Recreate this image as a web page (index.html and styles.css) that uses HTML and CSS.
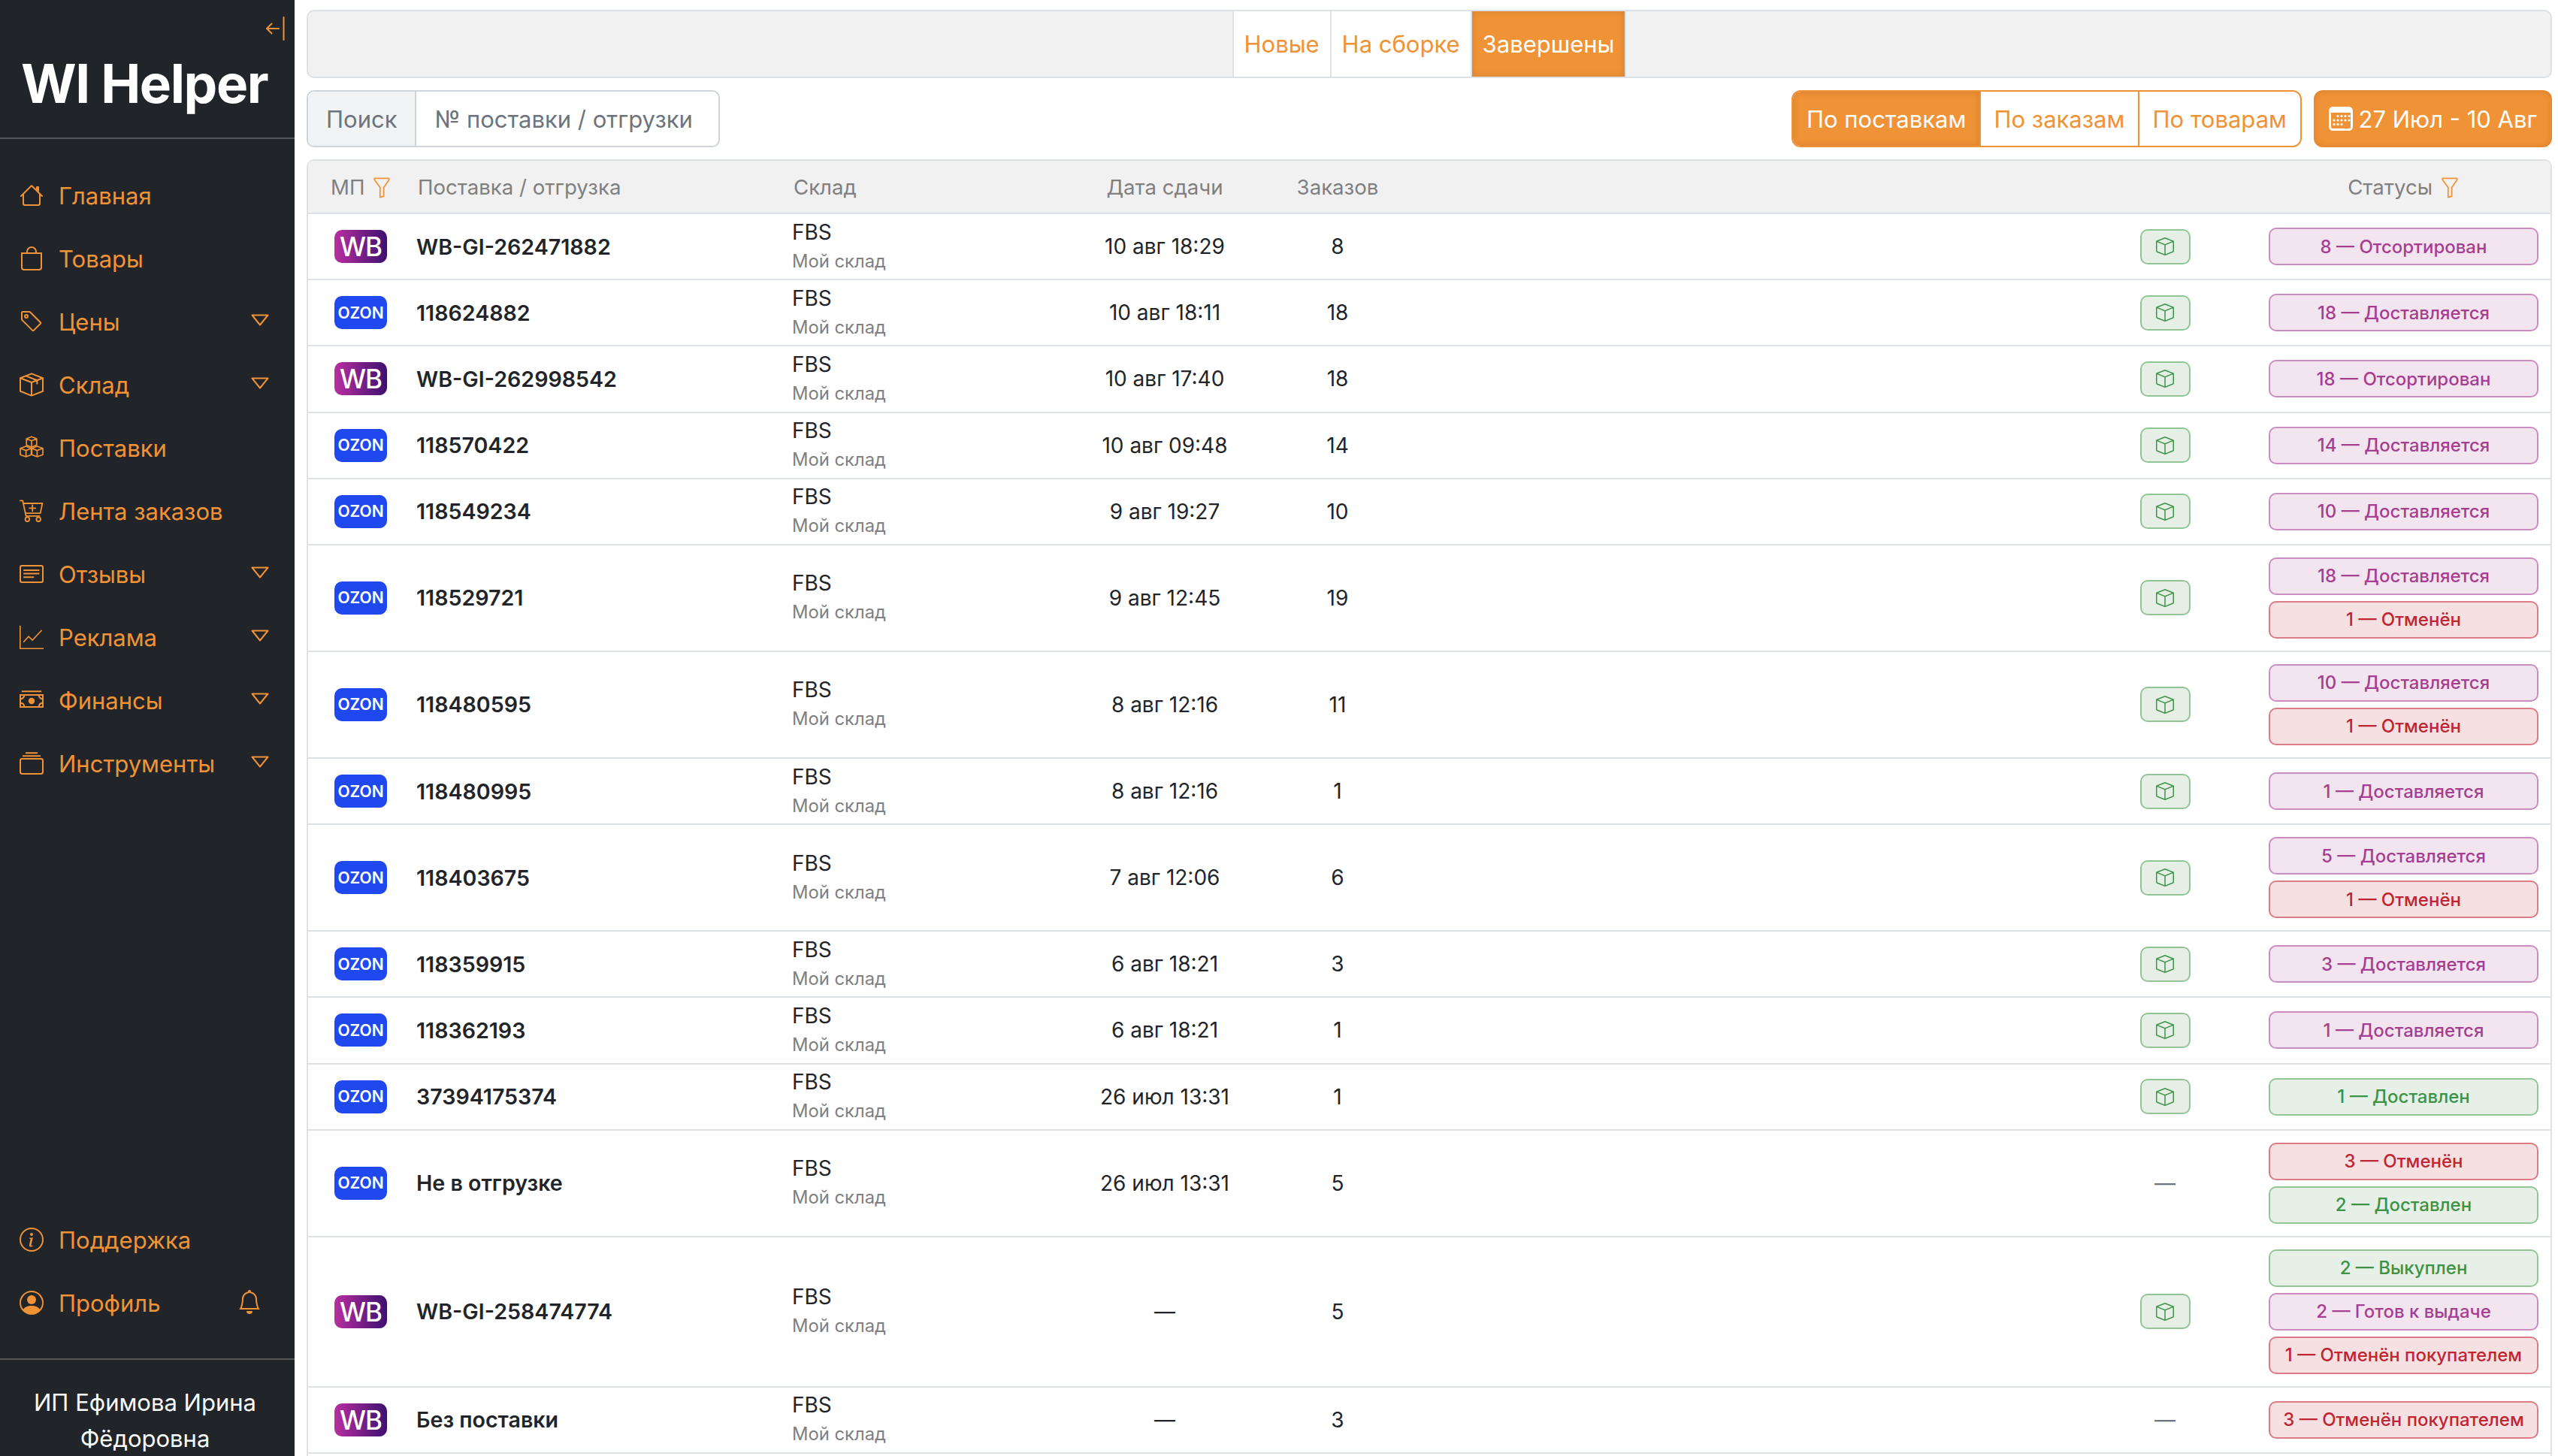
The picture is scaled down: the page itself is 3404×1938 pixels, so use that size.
FILE: index.html
```html
<!DOCTYPE html>
<html lang="ru">
<head>
    <meta charset="UTF-8">
    <title>WI Helper</title>
    <link rel="stylesheet" href="styles.css">
</head>
<body>
    <svg class="sprite" xmlns="http://www.w3.org/2000/svg">
        <symbol id="i-house" viewBox="0 0 16 16"><path fill="currentColor" d="M2 13.5V7h1v6.5a.5.5 0 0 0 .5.5h9a.5.5 0 0 0 .5-.5V7h1v6.5a1.5 1.5 0 0 1-1.5 1.5h-9A1.5 1.5 0 0 1 2 13.5zm11-11V6l-2-2V2.5a.5.5 0 0 1 .5-.5h1a.5.5 0 0 1 .5.5z"/><path fill="currentColor" d="M7.293 1.5a1 1 0 0 1 1.414 0l6.647 6.646a.5.5 0 0 1-.708.708L8 2.207 1.354 8.854a.5.5 0 1 1-.708-.708L7.293 1.5z"/></symbol>
        <symbol id="i-bag" viewBox="0 0 16 16"><path fill="currentColor" d="M8 1a2.5 2.5 0 0 1 2.5 2.5V4h-5v-.5A2.5 2.5 0 0 1 8 1zm3.5 3v-.5a3.5 3.5 0 1 0-7 0V4H1v10a2 2 0 0 0 2 2h10a2 2 0 0 0 2-2V4h-3.5zM2 5h12v9a1 1 0 0 1-1 1H3a1 1 0 0 1-1-1V5z"/></symbol>
        <symbol id="i-tag" viewBox="0 0 16 16"><path fill="currentColor" d="M6 4.5a1.5 1.5 0 1 1-3 0 1.5 1.5 0 0 1 3 0zm-1 0a.5.5 0 1 0-1 0 .5.5 0 0 0 1 0z"/><path fill="currentColor" d="M2 1h4.586a1 1 0 0 1 .707.293l7 7a1 1 0 0 1 0 1.414l-4.586 4.586a1 1 0 0 1-1.414 0l-7-7A1 1 0 0 1 1 6.586V2a1 1 0 0 1 1-1zm0 5.586 7 7L13.586 9l-7-7H2v4.586z"/></symbol>
        <symbol id="i-box" viewBox="0 0 16 16"><path fill="currentColor" d="M8.186 1.113a.5.5 0 0 0-.372 0L1.846 3.5 8 5.961 14.154 3.5 8.186 1.113zM15 4.239l-6.5 2.6v7.922l6.5-2.6V4.24zM7.5 14.762V6.838L1 4.239v7.925l6.5 2.6zM7.443.184a1.5 1.5 0 0 1 1.114 0l7.129 2.852A.5.5 0 0 1 16 3.5v8.662a1 1 0 0 1-.629.928l-7.185 2.874a.5.5 0 0 1-.372 0L.63 13.09a1 1 0 0 1-.63-.928V3.5a.5.5 0 0 1 .314-.464L7.443.184z"/></symbol>
        <symbol id="i-seam" viewBox="0 0 16 16"><g fill="none" stroke="currentColor" stroke-width="1" stroke-linejoin="round"><path d="M8 .7 15.5 3.6v8.8L8 15.3.5 12.4V3.6z"/><path d="M.5 3.6 8 6.5l7.5-2.9M8 6.5v8.8M4.2 2.2l7.5 2.9v2.6"/></g></symbol>
        <symbol id="i-boxes" viewBox="0 0 16 16"><g fill="none" stroke="currentColor" stroke-width=".85" stroke-linejoin="round"><path d="M8 .6 11.400 2v4.200L8 7.600 4.600 6.200V2zM4.600 2 8 3.400 11.400 2M8 3.400v4.200"/><path d="M4.300 7 7.800 8.400v4.200l-3.500 1.400-3.800-1.400V8.400zM.5 8.400l3.800 1.400 3.500-1.400M4.300 9.800V14"/><path d="M11.700 7 15.500 8.400v4.200L11.700 14l-3.500-1.400V8.400zM8.200 8.400l3.500 1.400 3.800-1.400M11.700 9.800V14"/></g></symbol>
        <symbol id="i-cart" viewBox="0 0 16 16"><g fill="none" stroke="currentColor" stroke-width=".9" stroke-linecap="round" stroke-linejoin="round"><path d="M.5 1.200h1.600l2.200 10.200h9"/><path d="M2.600 3h12.600l-1.400 6.600H3.900"/><path d="M8.600 4.200v4M6.600 6.200h4"/><circle cx="5.200" cy="13.600" r="1.400"/><circle cx="12.600" cy="13.600" r="1.400"/></g></symbol>
        <symbol id="i-card" viewBox="0 0 16 16"><rect x=".5" y="2.500" width="15" height="11" rx="1" fill="none" stroke="currentColor"/><path fill="currentColor" d="M2.600 5h10.600v1H2.600zM2.600 7.300h10.600v1H2.600zM2.600 9.600h7v1h-7z"/></symbol>
        <symbol id="i-graph" viewBox="0 0 16 16"><path fill="none" stroke="currentColor" stroke-width=".8" d="M.4 .4v15.200h15.600M2.600 11.400 6 7.600l2.600 2.400L14.800 3.400"/></symbol>
        <symbol id="i-cash" viewBox="0 0 16 16"><path fill="currentColor" d="M1.400 1.600h13.200v1H1.400zM0 4h16v9H0zm1 1v1.600A2 2 0 0 0 2.600 5zm12.400 0A2 2 0 0 0 15 6.600V5zM1 10.400V12h1.600A2 2 0 0 0 1 10.400zM15 12v-1.600A2 2 0 0 0 13.400 12zM3.600 5A3 3 0 0 1 1 7.600v1.800A3 3 0 0 1 3.600 12h8.800A3 3 0 0 1 15 9.400V7.600A3 3 0 0 1 12.400 5z"/><circle cx="8" cy="8.500" r="2.100" fill="currentColor"/></symbol>
        <symbol id="i-coll" viewBox="0 0 16 16"><rect x=".5" y="5" width="15" height="10" rx="1.200" fill="none" stroke="currentColor"/><path fill="currentColor" d="M2 2.600h12v1H2zM4 .6h8v1H4z"/></symbol>
        <symbol id="i-info" viewBox="0 0 16 16"><circle cx="8" cy="8" r="7.500" fill="none" stroke="currentColor"/><path fill="currentColor" d="m8.900 6.600-2.300.3-.1.4.5.1c.3.1.3.2.3.4l-.8 3.600c-.2.9.1 1.400.8 1.400.6 0 1.200-.3 1.500-.6l.1-.5c-.2.2-.5.3-.8.3-.3 0-.4-.2-.3-.5zM9 4.500a1 1 0 1 1-2 0 1 1 0 0 1 2 0z"/></symbol>
        <symbol id="i-user" viewBox="0 0 16 16"><path fill="currentColor" d="M11 6a3 3 0 1 1-6 0 3 3 0 0 1 6 0z"/><path fill="currentColor" fill-rule="evenodd" d="M0 8a8 8 0 1 1 16 0A8 8 0 0 1 0 8zm8-7a7 7 0 0 0-5.468 11.370C3.242 11.226 4.805 10 8 10s4.757 1.225 5.468 2.370A7 7 0 0 0 8 1z"/></symbol>
        <symbol id="i-bell" viewBox="0 0 16 16"><path fill="currentColor" d="M8 16a2 2 0 0 0 2-2H6a2 2 0 0 0 2 2zM8 1.918l-.797.161A4.002 4.002 0 0 0 4 6c0 .628-.134 2.197-.459 3.742-.16.767-.376 1.566-.663 2.258h10.244c-.287-.692-.502-1.490-.663-2.258C12.134 8.197 12 6.628 12 6a4.002 4.002 0 0 0-3.203-3.920L8 1.917zM14.220 12c.223.447.481.801.78 1H1c.299-.199.557-.553.78-1C2.680 10.200 3 6.880 3 6c0-2.420 1.720-4.440 4.005-4.901a1 1 0 1 1 1.990 0A5.002 5.002 0 0 1 13 6c0 .88.32 4.200 1.220 6z"/></symbol>
        <symbol id="i-caret" viewBox="0 0 24 16"><path fill="none" stroke="currentColor" stroke-width="2" stroke-linejoin="round" d="M1.500 1.500h21L12 14.500z"/></symbol>
        <symbol id="i-funnel" viewBox="0 0 24 32"><path fill="none" stroke="currentColor" stroke-width="2" stroke-linejoin="round" d="M1 1.500h22v2.500L15 15.500V29l-5.500 1.500v-15L1 4z"/></symbol>
    </svg>

    <aside class="sidebar">
        <div class="collapse-btn">
            <svg viewBox="0 0 26 32" width="26" height="32"><path fill="none" stroke="currentColor" stroke-width="2" stroke-linecap="round" stroke-linejoin="round" d="M24.500 1v30M18 16H2M8.500 9.500 2 16l6.500 6.500"/></svg>
        </div>
        <div class="logo">WI Helper</div>
        <nav class="nav">
            <a class="nav-item"><svg class="nav-icon"><use href="#i-house"/></svg>Главная</a>
            <a class="nav-item"><svg class="nav-icon"><use href="#i-bag"/></svg>Товары</a>
            <a class="nav-item"><svg class="nav-icon"><use href="#i-tag"/></svg>Цены<svg class="caret"><use href="#i-caret"/></svg></a>
            <a class="nav-item"><svg class="nav-icon"><use href="#i-seam"/></svg>Склад<svg class="caret"><use href="#i-caret"/></svg></a>
            <a class="nav-item"><svg class="nav-icon"><use href="#i-boxes"/></svg>Поставки</a>
            <a class="nav-item"><svg class="nav-icon"><use href="#i-cart"/></svg>Лента заказов</a>
            <a class="nav-item"><svg class="nav-icon"><use href="#i-card"/></svg>Отзывы<svg class="caret"><use href="#i-caret"/></svg></a>
            <a class="nav-item"><svg class="nav-icon"><use href="#i-graph"/></svg>Реклама<svg class="caret"><use href="#i-caret"/></svg></a>
            <a class="nav-item"><svg class="nav-icon"><use href="#i-cash"/></svg>Финансы<svg class="caret"><use href="#i-caret"/></svg></a>
            <a class="nav-item"><svg class="nav-icon"><use href="#i-coll"/></svg>Инструменты<svg class="caret"><use href="#i-caret"/></svg></a>
        </nav>
        <nav class="nav nav-bottom">
            <a class="nav-item"><svg class="nav-icon"><use href="#i-info"/></svg>Поддержка</a>
            <a class="nav-item"><svg class="nav-icon"><use href="#i-user"/></svg>Профиль<svg class="bell"><use href="#i-bell"/></svg></a>
        </nav>
        <div class="account">ИП Ефимова Ирина Фёдоровна</div>
    </aside>

    <main class="main">
        <div class="tabs">
            <a class="tab">Новые</a>
            <a class="tab">На сборке</a>
            <a class="tab active">Завершены</a>
        </div>

        <div class="toolbar">
            <div class="search">
                <span class="search-label">Поиск</span>
                <span class="search-input">№ поставки / отгрузки</span>
            </div>
            <div class="view-group">
                <a class="view-btn active">По поставкам</a>
                <a class="view-btn">По заказам</a>
                <a class="view-btn">По товарам</a>
            </div>
            <a class="date-btn">
                <svg viewBox="0 0 32 32" width="32" height="32"><rect x="1.500" y="1.500" width="29" height="29" rx="4" fill="none" stroke="currentColor" stroke-width="3"/><path fill="currentColor" d="M2 3h28v5H2z"/><g fill="currentColor"><circle cx="12" cy="12.500" r="1.600"/><circle cx="17" cy="12.500" r="1.600"/><circle cx="22" cy="12.500" r="1.600"/><circle cx="27" cy="12.500" r="1.600"/><circle cx="7" cy="18" r="1.600"/><circle cx="12" cy="18" r="1.600"/><circle cx="17" cy="18" r="1.600"/><circle cx="22" cy="18" r="1.600"/><circle cx="27" cy="18" r="1.600"/><circle cx="7" cy="23.500" r="1.600"/><circle cx="12" cy="23.500" r="1.600"/><circle cx="17" cy="23.500" r="1.600"/></g></svg>
                27 Июл - 10 Авг
            </a>
        </div>

        <div class="table-wrap">
            <table class="orders">
                <colgroup>
                    <col class="col-mp"><col class="col-supply"><col class="col-store"><col class="col-date"><col class="col-count"><col><col class="col-act"><col class="col-status">
                </colgroup>
                <thead>
                    <tr>
                        <th class="th-mp">МП <svg class="funnel"><use href="#i-funnel"/></svg></th>
                        <th>Поставка / отгрузка</th>
                        <th>Склад</th>
                        <th class="center">Дата сдачи</th>
                        <th class="center">Заказов</th>
                        <th></th>
                        <th></th>
                        <th class="center">Статусы <svg class="funnel"><use href="#i-funnel"/></svg></th>
                    </tr>
                </thead>
                <tbody>
                    <tr>
                        <td class="center"><span class="mp wb">WB</span></td><td class="supply">WB-GI-262471882</td>
                        <td><div class="store">FBS</div><div class="store-sub">Мой склад</div></td>
                        <td class="center">10 авг 18:29</td><td class="center">8</td><td></td>
                        <td class="center"><span class="box-btn"><svg><use href="#i-box"/></svg></span></td>
                        <td class="statuses"><div class="badge pink">8 — Отсортирован</div></td>
                    </tr>
                    <tr>
                        <td class="center"><span class="mp ozon">OZON</span></td><td class="supply">118624882</td>
                        <td><div class="store">FBS</div><div class="store-sub">Мой склад</div></td>
                        <td class="center">10 авг 18:11</td><td class="center">18</td><td></td>
                        <td class="center"><span class="box-btn"><svg><use href="#i-box"/></svg></span></td>
                        <td class="statuses"><div class="badge pink">18 — Доставляется</div></td>
                    </tr>
                    <tr>
                        <td class="center"><span class="mp wb">WB</span></td><td class="supply">WB-GI-262998542</td>
                        <td><div class="store">FBS</div><div class="store-sub">Мой склад</div></td>
                        <td class="center">10 авг 17:40</td><td class="center">18</td><td></td>
                        <td class="center"><span class="box-btn"><svg><use href="#i-box"/></svg></span></td>
                        <td class="statuses"><div class="badge pink">18 — Отсортирован</div></td>
                    </tr>
                    <tr>
                        <td class="center"><span class="mp ozon">OZON</span></td><td class="supply">118570422</td>
                        <td><div class="store">FBS</div><div class="store-sub">Мой склад</div></td>
                        <td class="center">10 авг 09:48</td><td class="center">14</td><td></td>
                        <td class="center"><span class="box-btn"><svg><use href="#i-box"/></svg></span></td>
                        <td class="statuses"><div class="badge pink">14 — Доставляется</div></td>
                    </tr>
                    <tr>
                        <td class="center"><span class="mp ozon">OZON</span></td><td class="supply">118549234</td>
                        <td><div class="store">FBS</div><div class="store-sub">Мой склад</div></td>
                        <td class="center">9 авг 19:27</td><td class="center">10</td><td></td>
                        <td class="center"><span class="box-btn"><svg><use href="#i-box"/></svg></span></td>
                        <td class="statuses"><div class="badge pink">10 — Доставляется</div></td>
                    </tr>
                    <tr>
                        <td class="center"><span class="mp ozon">OZON</span></td><td class="supply">118529721</td>
                        <td><div class="store">FBS</div><div class="store-sub">Мой склад</div></td>
                        <td class="center">9 авг 12:45</td><td class="center">19</td><td></td>
                        <td class="center"><span class="box-btn"><svg><use href="#i-box"/></svg></span></td>
                        <td class="statuses"><div class="badge pink">18 — Доставляется</div><div class="badge red">1 — Отменён</div></td>
                    </tr>
                    <tr>
                        <td class="center"><span class="mp ozon">OZON</span></td><td class="supply">118480595</td>
                        <td><div class="store">FBS</div><div class="store-sub">Мой склад</div></td>
                        <td class="center">8 авг 12:16</td><td class="center">11</td><td></td>
                        <td class="center"><span class="box-btn"><svg><use href="#i-box"/></svg></span></td>
                        <td class="statuses"><div class="badge pink">10 — Доставляется</div><div class="badge red">1 — Отменён</div></td>
                    </tr>
                    <tr>
                        <td class="center"><span class="mp ozon">OZON</span></td><td class="supply">118480995</td>
                        <td><div class="store">FBS</div><div class="store-sub">Мой склад</div></td>
                        <td class="center">8 авг 12:16</td><td class="center">1</td><td></td>
                        <td class="center"><span class="box-btn"><svg><use href="#i-box"/></svg></span></td>
                        <td class="statuses"><div class="badge pink">1 — Доставляется</div></td>
                    </tr>
                    <tr>
                        <td class="center"><span class="mp ozon">OZON</span></td><td class="supply">118403675</td>
                        <td><div class="store">FBS</div><div class="store-sub">Мой склад</div></td>
                        <td class="center">7 авг 12:06</td><td class="center">6</td><td></td>
                        <td class="center"><span class="box-btn"><svg><use href="#i-box"/></svg></span></td>
                        <td class="statuses"><div class="badge pink">5 — Доставляется</div><div class="badge red">1 — Отменён</div></td>
                    </tr>
                    <tr>
                        <td class="center"><span class="mp ozon">OZON</span></td><td class="supply">118359915</td>
                        <td><div class="store">FBS</div><div class="store-sub">Мой склад</div></td>
                        <td class="center">6 авг 18:21</td><td class="center">3</td><td></td>
                        <td class="center"><span class="box-btn"><svg><use href="#i-box"/></svg></span></td>
                        <td class="statuses"><div class="badge pink">3 — Доставляется</div></td>
                    </tr>
                    <tr>
                        <td class="center"><span class="mp ozon">OZON</span></td><td class="supply">118362193</td>
                        <td><div class="store">FBS</div><div class="store-sub">Мой склад</div></td>
                        <td class="center">6 авг 18:21</td><td class="center">1</td><td></td>
                        <td class="center"><span class="box-btn"><svg><use href="#i-box"/></svg></span></td>
                        <td class="statuses"><div class="badge pink">1 — Доставляется</div></td>
                    </tr>
                    <tr>
                        <td class="center"><span class="mp ozon">OZON</span></td><td class="supply">37394175374</td>
                        <td><div class="store">FBS</div><div class="store-sub">Мой склад</div></td>
                        <td class="center">26 июл 13:31</td><td class="center">1</td><td></td>
                        <td class="center"><span class="box-btn"><svg><use href="#i-box"/></svg></span></td>
                        <td class="statuses"><div class="badge green">1 — Доставлен</div></td>
                    </tr>
                    <tr>
                        <td class="center"><span class="mp ozon">OZON</span></td><td class="supply">Не в отгрузке</td>
                        <td><div class="store">FBS</div><div class="store-sub">Мой склад</div></td>
                        <td class="center">26 июл 13:31</td><td class="center">5</td><td></td>
                        <td class="center dash">—</td>
                        <td class="statuses"><div class="badge red">3 — Отменён</div><div class="badge green">2 — Доставлен</div></td>
                    </tr>
                    <tr>
                        <td class="center"><span class="mp wb">WB</span></td><td class="supply">WB-GI-258474774</td>
                        <td><div class="store">FBS</div><div class="store-sub">Мой склад</div></td>
                        <td class="center">—</td><td class="center">5</td><td></td>
                        <td class="center"><span class="box-btn"><svg><use href="#i-box"/></svg></span></td>
                        <td class="statuses"><div class="badge green">2 — Выкуплен</div><div class="badge pink">2 — Готов к выдаче</div><div class="badge red">1 — Отменён покупателем</div></td>
                    </tr>
                    <tr>
                        <td class="center"><span class="mp wb">WB</span></td><td class="supply">Без поставки</td>
                        <td><div class="store">FBS</div><div class="store-sub">Мой склад</div></td>
                        <td class="center">—</td><td class="center">3</td><td></td>
                        <td class="center dash">—</td>
                        <td class="statuses"><div class="badge red">3 — Отменён покупателем</div></td>
                    </tr>
                    <tr><td></td><td></td><td></td><td></td><td></td><td></td><td></td><td></td></tr>
                </tbody>
            </table>
        </div>
    </main>
</body>
</html>
```

FILE: styles.css
```css
* { box-sizing: border-box; }
html, body { height: 100%; }
body {
    margin: 0;
    display: flex;
    height: 1938px;
    overflow: hidden;
    background: #fff;
    color: #212529;
    font-family: Inter, "Noto Sans", sans-serif;
    font-size: 28px;
}
.sprite { display: none; }

/* sidebar */
.sidebar {
    width: 392px;
    flex: none;
    display: flex;
    flex-direction: column;
    background: #212529;
    color: #f09236;
}
.collapse-btn {
    display: flex;
    justify-content: flex-end;
    padding: 22px 13px 0 0;
    height: 54px;
}
.logo {
    height: 131px;
    padding: 15px 0 0 28px;
    line-height: 84px;
    font-size: 71px;
    font-weight: 700;
    letter-spacing: -1.4px;
    color: #fff;
    white-space: nowrap;
    border-bottom: 2px solid #555;
}
.nav { display: flex; flex-direction: column; padding: 33px 0 0 26px; }
.nav-item {
    display: flex;
    align-items: center;
    height: 84px;
    font-size: 31px;
}
.nav-icon { width: 32px; height: 32px; margin-right: 20px; flex: none; }
.caret { width: 24px; height: 16px; margin-left: auto; margin-right: 34px; margin-top: -4px; }
.bell { width: 32px; height: 32px; margin-left: auto; margin-right: 44px; margin-top: -2px; }
.nav-bottom { margin-top: auto; padding-top: 0; padding-bottom: 32px; }
.account {
    border-top: 2px solid #555;
    height: 130px;
    padding: 33px 33px 0 27px;
    text-align: center;
    font-size: 31px;
    line-height: 48px;
    color: #f8f9fa;
}

/* main area */
.main { flex: 1; min-width: 0; padding: 13px 8px 0 16px; overflow: hidden; }
.tabs {
    display: flex;
    justify-content: center;
    height: 91px;
    background: #f1f1f1;
    border: 2px solid #dee2e6;
    border-radius: 10px;
    margin-bottom: 16px;
}
.tab {
    display: flex;
    align-items: center;
    padding: 0 14px;
    background: #fff;
    color: #f09236;
    font-size: 31px;
    border-left: 2px solid #dee2e6;
}
.tab.active {
    background: #f09236;
    color: #fff;
    box-shadow: inset 0 0 10px rgba(0, 0, 0, .12);
}
.tab:last-child { border-right: 2px solid #dee2e6; }

.toolbar { display: flex; align-items: center; height: 76px; margin-bottom: 16px; }
.search {
    display: flex;
    align-items: stretch;
    width: 550px;
    height: 76px;
    border: 2px solid #ced4da;
    border-radius: 10px;
    font-size: 31px;
    color: #6c757d;
    white-space: nowrap;
    overflow: hidden;
}
.search-label {
    display: flex;
    align-items: center;
    padding: 0 24px;
    background: #f1f3f4;
    border-right: 2px solid #ced4da;
}
.search-input { display: flex; align-items: center; padding: 0 24px; }
.view-group {
    display: flex;
    height: 76px;
    margin-left: auto;
    border: 2px solid #f09236;
    border-radius: 12px;
    overflow: hidden;
    font-size: 31px;
    color: #f09236;
}
.view-btn {
    display: flex;
    align-items: center;
    padding: 0 17.6px;
    border-left: 2px solid #f09236;
}
.view-btn:first-child { border-left: 0; }
.view-btn.active {
    background: #f09236;
    color: #fff;
    box-shadow: inset 0 0 10px rgba(0, 0, 0, .12);
}
.date-btn {
    display: flex;
    align-items: center;
    gap: 8px;
    height: 76px;
    margin-left: 16px;
    padding: 0 20px;
    border-radius: 12px;
    background: #f09236;
    color: #fff;
    font-size: 31px;
    white-space: nowrap;
    box-shadow: inset 0 0 10px rgba(0, 0, 0, .12);
}

/* table */
.table-wrap {
    border: 2px solid #dee2e6;
    border-bottom: 0;
    border-radius: 10px 10px 0 0;
    overflow: hidden;
}
.orders { width: 100%; border-collapse: collapse; table-layout: fixed; }
.col-mp { width: 140px; }
.col-supply { width: 500px; }
.col-store { width: 360px; }
.col-date { width: 280px; }
.col-count { width: 180px; }
.col-act { width: 240px; }
.col-status { width: 393px; }
.orders th {
    height: 70px;
    padding: 0 6px;
    background: #f1f1f1;
    color: #808080;
    font-size: 27.6px;
    font-weight: 400;
    text-align: left;
    border-bottom: 2px solid #dee2e6;
}
.orders th.th-mp { padding-left: 30px; }
.orders td {
    height: 88.2px;
    padding: 0 4px;
    border-bottom: 2px solid #dee2e6;
    vertical-align: middle;
}
.orders .center { text-align: center; }
.funnel { width: 22px; height: 28px; color: #f09236; vertical-align: -5px; margin-left: 4px; }
.supply { font-weight: 600; font-size: 28.6px; }
.store { line-height: 38px; }
.store-sub { line-height: 38px; margin-top: 1px; font-size: 23.8px; color: #808080; }
.mp {
    display: inline-flex;
    align-items: center;
    justify-content: center;
    width: 70px;
    height: 44px;
    border-radius: 10px;
    color: #fff;
    vertical-align: middle;
}
.mp.wb { background: linear-gradient(90deg, #b92f9f, #3d1070); font-size: 35px; font-weight: 500; letter-spacing: -1px; }
.mp.ozon { background: #1f48ee; font-size: 21px; font-weight: 600; }
.box-btn {
    display: inline-flex;
    align-items: center;
    justify-content: center;
    width: 67px;
    height: 47px;
    background: #e6efe6;
    border: 2px solid #92c596;
    border-radius: 10px;
    color: #3f9448;
    vertical-align: middle;
}
.box-btn svg { width: 24px; height: 24px; }
.dash { color: #6c757d; }
.orders td.statuses { padding: 16px 16px 16px 18px; }
.badge {
    display: flex;
    align-items: center;
    justify-content: center;
    height: 50px;
    border: 2px solid;
    border-radius: 10px;
    font-size: 24px;
    font-weight: 500;
}
.badge + .badge { margin-top: 8px; }
.badge.pink { background: #f2e5f0; border-color: #cb8cc1; color: #a63e91; }
.badge.red { background: #f6e0e2; border-color: #da7b85; color: #bf2532; }
.badge.green { background: #e6f0e7; border-color: #93c597; color: #3c9346; }
```
